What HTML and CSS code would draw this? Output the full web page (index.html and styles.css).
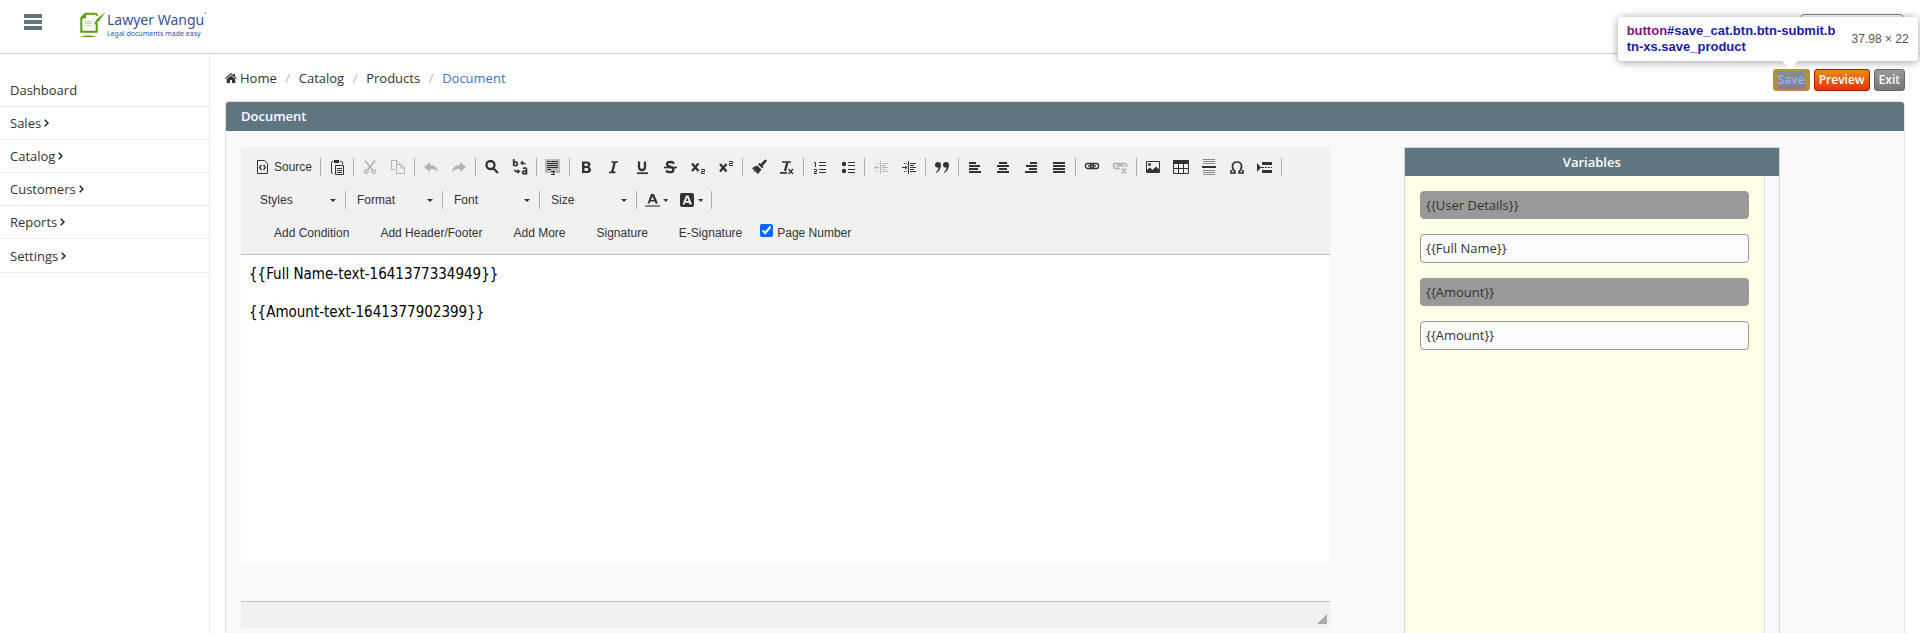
FILE: index.html
```html
<!DOCTYPE html>
<html lang="en">
<head>
<meta charset="utf-8">
<title>Document</title>
<link rel="stylesheet" href="styles.css">
</head>
<body>
<header class="topbar">
  <button class="menu-toggle" aria-label="Toggle menu"><span></span><span></span><span></span></button>
  <a class="logo" href="#">
    <svg class="logo-mark" width="26" height="26" viewBox="0 0 26 26">
      <path d="M5 1H18V20H1V5Z" fill="#fff"/>
      <path d="M15 1.800H5.500L1.300 6V19.700H16.700V11" fill="none" stroke="#5a9e0c" stroke-width="2"/>
      <path d="M1 6.500L6 1V6.500Z" fill="#5a9e0c"/>
      <path d="M5 9.500H12M5 11.500H12M5 13.500H12" stroke="#c0dca0"/>
      <path d="M25.500 0L17 7L13 13.500L19 9Z" fill="#5a9e0c"/>
      <path d="M14 2H17V4" fill="none" stroke="#5a9e0c" stroke-width="1.500"/>
      <path d="M0 24Q8 23 17 24Q8 26.500 0 24Z" fill="#5a9e0c"/>
    </svg>
    <span class="logo-text"><span class="logo-name">Lawyer Wangu<span class="logo-tick">'</span></span><span class="logo-tag">Legal documents made easy</span></span>
  </a>
  <button class="account" aria-label="Account"></button>
</header>
<div class="shell">
  <nav class="sidebar">
    <a href="#">Dashboard</a>
    <a href="#">Sales<svg width="5" height="8" viewBox="0 0 5 8"><path d="M.7 .7L4 4L.7 7.300"/></svg></a>
    <a href="#">Catalog<svg width="5" height="8" viewBox="0 0 5 8"><path d="M.7 .7L4 4L.7 7.300"/></svg></a>
    <a href="#">Customers<svg width="5" height="8" viewBox="0 0 5 8"><path d="M.7 .7L4 4L.7 7.300"/></svg></a>
    <a href="#">Reports<svg width="5" height="8" viewBox="0 0 5 8"><path d="M.7 .7L4 4L.7 7.300"/></svg></a>
    <a href="#">Settings<svg width="5" height="8" viewBox="0 0 5 8"><path d="M.7 .7L4 4L.7 7.300"/></svg></a>
  </nav>
  <main class="main">
    <div class="page-head">
      <nav class="crumbs">
        <a href="#"><svg width="12" height="10" viewBox="0 0 12 10"><path d="M6 0L8.500 2.200V.7H10V3.500L12 5.300L11.300 6L6 1.500L.7 6L0 5.300ZM6 2.500L10.300 6V10H7V7H5V10H1.700V6Z" fill="#333"/></svg>Home</a><i>/</i><a href="#">Catalog</a><i>/</i><a href="#">Products</a><i>/</i><a class="current" href="#">Document</a>
      </nav>
      <div class="actions">
        <div class="save-wrap">
          <button class="btn btn-save"><span>Save</span></button>
          <div class="inspector">
            <span class="selector"><b>button</b>#save_cat.btn.btn-submit.b<br>tn-xs.save_product</span>
            <span class="dims">37.98 × 22</span>
          </div>
        </div>
        <button class="btn btn-preview">Preview</button>
        <button class="btn btn-exit">Exit</button>
      </div>
    </div>
    <section class="panel">
      <h1 class="panel-title">Document</h1>
      <div class="panel-body">
        <div class="editor">
          <div class="toolbar">
            <div class="row">
              <button class="tool"><svg viewBox="0 0 16 16"><path d="M2.500 1.500H9.500L12.500 4.500V14.500H2.500Z" class="ln"/><path d="M6.500 6L4.500 8.500L6.500 11M8.500 6L10.500 8.500L8.500 11" class="ln thick"/></svg><span>Source</span></button>
              <span class="sep"></span>
              <button class="tool" aria-label="Paste from clipboard"><svg viewBox="0 0 16 16"><path d="M4 2.500H3Q2.500 2.500 2.500 4V13Q2.500 14.500 4 14.500M11 2.500H12.500Q13.500 2.500 13.500 4V5" class="ln"/><path d="M5 1H10V4H5Z"/><path d="M6.500 6.500H14.500V15.500H6.500ZM8 9.500H13M8 11.500H13M8 13.500H13" class="ln"/></svg></button>
              <span class="sep"></span>
              <button class="tool off" aria-label="Cut"><svg viewBox="0 0 16 16"><path d="M3 1.500L10.500 11M13 1.500L5.500 11" class="ln bold"/><circle cx="4.300" cy="12.600" r="1.800" class="ln thick"/><circle cx="11.700" cy="12.600" r="1.800" class="ln thick"/></svg></button>
              <button class="tool off" aria-label="Copy"><svg viewBox="0 0 16 16"><path d="M5 10.500H1.500V1.500H6.500L9.500 4.500M6.500 1.500V5M6.500 5.500H11.500L14.500 8.500V14.500H6.500ZM11 5.500V9H14" class="ln"/></svg></button>
              <span class="sep"></span>
              <button class="tool off" aria-label="Undo"><svg viewBox="0 0 16 16"><path d="M1 8L7 3V6Q14 6 15 13Q12 9.500 7 10V13Z"/></svg></button>
              <button class="tool off" aria-label="Redo"><svg viewBox="0 0 16 16"><path d="M15 8L9 3V6Q2 6 1 13Q4 9.500 9 10V13Z"/></svg></button>
              <span class="sep"></span>
              <button class="tool" aria-label="Find"><svg viewBox="0 0 16 16"><circle cx="6.500" cy="6" r="4" class="ln heavy"/><path d="M9.500 9.500L14 14" class="ln heavy"/></svg></button>
              <button class="tool" aria-label="Replace"><svg viewBox="0 0 16 16"><path d="M1.700 0V7M2 3.500Q5.300 2 5.300 5Q5.300 7.500 2 6.300M11 9.500Q14.500 8 14.500 10.500V15.500M14.500 12Q10.500 11.500 10.500 13.700Q11.500 16 14.500 14" class="ln bold"/><path d="M8 4L11 1.500V3.500H12Q14 3.500 14 6Q13 5 11 5V6.500ZM8.500 12.500L5.500 15V13.200H4Q2 13 2 10Q3 11.500 5.500 11.500V10Z"/></svg></button>
              <span class="sep"></span>
              <button class="tool" aria-label="Select all"><svg viewBox="0 0 16 16"><path d="M0 0H15V14H0Z" class="shade"/><path d="M2 2.500H5M2 4.500H13M2 6.500H13M2 8.500H13M2 10.500H6M6 2.500H13" class="ln"/><path d="M6 12.500H10M8.500 12.500V16M6 15.500H10" class="ln"/></svg></button>
              <span class="sep"></span>
              <button class="tool" aria-label="Bold"><svg viewBox="0 0 16 16"><path fill-rule="evenodd" d="M4 2.500H9Q12.500 2.500 12.500 5.300Q12.500 7.300 10.800 7.800Q13 8.300 13 10.700Q13 14 9 14H4ZM6.500 4.500V7H8.500Q10 7 10 5.700Q10 4.500 8.500 4.500ZM6.500 9V12H8.500Q10.400 12 10.400 10.400Q10.400 9 8.500 9Z"/></svg></button>
              <button class="tool" aria-label="Italic"><svg viewBox="0 0 16 16"><path d="M5.500 3H12M3 13.300H9.500" class="ln bold"/><path d="M8.800 3L6.200 13" class="ln heavy"/></svg></button>
              <button class="tool" aria-label="Underline"><svg viewBox="0 0 16 16"><path d="M5 2.500V8Q5 11 8 11Q11 11 11 8V2.500" class="ln heavy"/><path d="M3 14.200H14" class="ln bold"/></svg></button>
              <button class="tool" aria-label="Strikethrough"><svg viewBox="0 0 16 16"><path d="M12 4.500Q11 3 8.200 3Q5 3 5 5.200Q5 7 8 7.700Q11.500 8.500 11.500 10.700Q11.500 13.200 8 13.200Q5.500 13.200 4 11.700" class="ln heavy"/><path d="M2 8.500H15" class="ln bold"/></svg></button>
              <button class="tool" aria-label="Subscript"><svg viewBox="0 0 16 16"><path d="M2 4.500L8.500 12M8.500 4.500L2 12" class="ln heavy"/><path d="M11 10.500H14.500V12.500H11.500V14.500H15" class="ln"/></svg></button>
              <button class="tool" aria-label="Superscript"><svg viewBox="0 0 16 16"><path d="M2 5L8.500 12.500M8.500 5L2 12.500" class="ln heavy"/><path d="M11 2.500H14.500V4.500H11.500V6.500H15" class="ln"/></svg></button>
              <span class="sep"></span>
              <button class="tool" aria-label="Copy formatting"><svg viewBox="0 0 16 16"><path d="M15.500 1L14 .500L9.500 5L8.500 4L7 5.500L11.500 9.500L12.500 8L11.500 7L15.700 2.500ZM6 6.500L1 9L2 10.500L3.500 10L2.500 11.500L4 13L5.500 11.500L5 13.500L7 15L10.500 10.500Z"/></svg></button>
              <button class="tool" aria-label="Remove format"><svg viewBox="0 0 16 16"><path d="M3 3H12M1 13.800H8" class="ln bold"/><path d="M8.500 3L6 12" class="ln heavy"/><path d="M9.500 10L14 15M14 10L9.500 15" class="ln thick"/></svg></button>
              <span class="sep"></span>
              <button class="tool" aria-label="Numbered list"><svg viewBox="0 0 16 16"><path d="M2 3.500H3.500V8M2 10.500H4.500V12.500H2.500V14.500H5M7 3.500H14M7 6.500H14M7 10.500H14M7 13.500H14" class="ln"/></svg></button>
              <button class="tool" aria-label="Bulleted list"><svg viewBox="0 0 16 16"><circle cx="4" cy="5" r="2.200"/><circle cx="4" cy="12" r="2.200"/><path d="M8 3.500H15M8 6.500H15M8 10.500H15M8 13.500H15" class="ln"/></svg></button>
              <span class="sep"></span>
              <button class="tool off" aria-label="Decrease indent"><svg viewBox="0 0 16 16"><path d="M7.500 2V15M9 4.500H15M9 6.500H13M9 8.500H15M9 10.500H13M9 12.500H15M2 8.500H6M3 4.500H4M5 4.500H6M3 12.500H4M5 12.500H6" class="ln"/><path d="M1 8.500L3.500 6.500V10.500Z"/></svg></button>
              <button class="tool" aria-label="Increase indent"><svg viewBox="0 0 16 16"><path d="M7.500 2V15M9 4.500H15M9 6.500H13M9 8.500H15M9 10.500H13M9 12.500H15M1 8.500H5M3 4.500H4M5 4.500H6M3 12.500H4M5 12.500H6" class="ln"/><path d="M6.500 8.500L4 6.500V10.500Z"/></svg></button>
              <span class="sep"></span>
              <button class="tool" aria-label="Block quote"><svg viewBox="0 0 16 16"><path d="M1 6A3 3 0 0 1 7 6Q7 11 2 14V13Q4.500 11 4.500 8.500Q1 9 1 6ZM9 6A3 3 0 0 1 15 6Q15 11 10 14V13Q12.500 11 12.500 8.500Q9 9 9 6Z"/></svg></button>
              <span class="sep"></span>
              <button class="tool" aria-label="Align left"><svg viewBox="0 0 16 16"><path d="M2 3H9V5H2ZM2 6H13V8H2ZM2 9H11V11H2ZM2 12H14V14H2Z"/></svg></button>
              <button class="tool" aria-label="Center"><svg viewBox="0 0 16 16"><path d="M4 3H12V5H4ZM2 6H14V8H2ZM4 9H12V11H4ZM2 12H14V14H2Z"/></svg></button>
              <button class="tool" aria-label="Align right"><svg viewBox="0 0 16 16"><path d="M7 3H14V5H7ZM3 6H14V8H3ZM6 9H14V11H6ZM2 12H14V14H2Z"/></svg></button>
              <button class="tool" aria-label="Justify"><svg viewBox="0 0 16 16"><path d="M2 3H14V5H2ZM2 6H14V8H2ZM2 9H14V11H2ZM2 12H14V14H2Z"/></svg></button>
              <span class="sep"></span>
              <button class="tool" aria-label="Link"><svg viewBox="0 0 16 16"><rect x="1.500" y="4.500" width="8" height="5" rx="2" class="ln thick"/><rect x="6.500" y="4.500" width="8" height="5" rx="2" class="ln thick"/><path d="M4 7H12" class="ln thick"/></svg></button>
              <button class="tool off" aria-label="Unlink"><svg viewBox="0 0 16 16"><path d="M8 9.500H3.500Q1.500 9.500 1.500 7Q1.500 4.500 3.500 4.500H7.500Q9.500 4.500 9.500 7M6.500 7Q6.500 4.500 8.500 4.500H12.500Q14.500 4.500 14.500 6.500V8M4 7H12M9.500 9.500L14 14.500M14 9.500L9.500 14.500" class="ln bold"/></svg></button>
              <span class="sep"></span>
              <button class="tool" aria-label="Image"><svg viewBox="0 0 16 16"><path d="M1.500 2.500H14.500V13.500H1.500Z" class="ln"/><circle cx="4.500" cy="5.500" r="1.500"/><path d="M2 13V11L5 8.500L7.500 11L11 7.500L14 10.500V13Z"/></svg></button>
              <button class="tool" aria-label="Table"><svg viewBox="0 0 16 16"><path d="M0 1H16V5H0Z"/><path d="M.5 4V14.500H15.500V4M0 9.500H16M5.500 5V15M10.500 5V15" class="ln"/></svg></button>
              <button class="tool" aria-label="Horizontal line"><svg viewBox="0 0 16 16"><path d="M2 .5H14M2 2.500H14M2 4.500H14M2 11.500H14M2 13.500H14M2 15.500H14" class="ln faint"/><path d="M1 7H15V9H1Z"/></svg></button>
              <button class="tool" aria-label="Special character"><svg viewBox="0 0 16 16"><path d="M2 11V14H6V12.500Q3.500 11 3.500 7.500Q3.500 3 8 3Q12.500 3 12.500 7.500Q12.500 11 10 12.500V14H14V11" class="ln bold"/></svg></button>
              <button class="tool" aria-label="Page break"><svg viewBox="0 0 16 16"><path d="M0 4L4 8.500L0 13ZM5 3H15V6H5ZM5 11H15V14H5Z"/><path d="M4 8.500H7M8 8.500H10M11 8.500H13M14 8.500H15" class="ln"/></svg></button>
              <span class="sep"></span>
            </div>
            <div class="row combos">
              <button class="combo">Styles<em></em></button><span class="sep"></span>
              <button class="combo">Format<em></em></button><span class="sep"></span>
              <button class="combo">Font<em></em></button><span class="sep"></span>
              <button class="combo">Size<em></em></button><span class="sep"></span>
              <button class="tool color" aria-label="Text color"><svg viewBox="0 0 16 16"><path fill-rule="evenodd" d="M6 2H9L13 11.500H10.500L9.800 9.500H5.300L4.500 11.500H2.500ZM7.500 4.500L6 8H9Z"/><path d="M0 13H15V15H0Z" class="swatch"/></svg><em></em></button>
              <button class="tool color" aria-label="Background color"><svg viewBox="0 0 16 16"><rect y="1" width="14" height="14" rx="2"/><path fill-rule="evenodd" fill="#f1f1f1" d="M6 3.500H8.500L12 12.500H9.500L9 10.800H5.200L4.600 12.500H2.500ZM7.200 5.500L5.900 9H8.400Z"/></svg><em></em></button>
              <span class="sep"></span>
            </div>
            <div class="row">
              <button class="tool plain">Add Condition</button>
              <button class="tool plain">Add Header/Footer</button>
              <button class="tool plain">Add More</button>
              <button class="tool plain">Signature</button>
              <button class="tool plain">E-Signature</button>
              <label class="check"><input type="checkbox" checked><span>Page Number</span></label>
            </div>
          </div>
          <div class="content" contenteditable="true">
            <p>{{Full Name-text-1641377334949}}</p>
            <p>{{Amount-text-1641377902399}}</p>
          </div>
          <div class="statusbar"><svg width="10" height="10" viewBox="0 0 10 10"><path d="M10 0V10H0Z" fill="#aaa"/></svg></div>
        </div>
        <aside class="variables">
          <h2>Variables</h2>
          <div class="var-list">
            <div class="var group">{{User Details}}</div>
            <div class="var">{{Full Name}}</div>
            <div class="var group">{{Amount}}</div>
            <div class="var">{{Amount}}</div>
          </div>
        </aside>
      </div>
    </section>
  </main>
</div>
</body>
</html>
```
FILE: styles.css
```css
* { box-sizing: border-box; }
body {
  margin: 0;
  height: 100vh;
  overflow: hidden;
  display: flex;
  flex-direction: column;
  background: #fff;
  color: #333;
  font: 13px/18px "Open Sans", sans-serif;
}
a { color: inherit; text-decoration: none; }
button { font: inherit; color: inherit; cursor: pointer; margin: 0; }

.topbar {
  display: flex;
  align-items: flex-start;
  height: 54px;
  flex: none;
  padding: 12px 16px 0 24px;
  border-bottom: 1px solid #ccd0d4;
}
.menu-toggle {
  display: flex;
  flex-direction: column;
  gap: 2px;
  width: 18px;
  padding: 2px 0 0;
  border: 0;
  background: none;
}
.menu-toggle span { height: 4px; background: #607680; }
.logo { display: flex; gap: 1px; margin-left: 38px; color: #3851a3; }
.logo-text { display: flex; flex-direction: column; }
.logo-name { font: 14px/16px "Noto Sans", sans-serif; }
.logo-tick { font-size: 8px; vertical-align: top; line-height: 8px; }
.logo-tag { font: 7px/12px "Noto Sans", sans-serif; }
.account {
  width: 104px;
  height: 28px;
  margin: 2px 0 0 auto;
  border: 1px solid #888;
  border-radius: 4px;
  background: #fff;
}

.shell { flex: 1; min-height: 0; display: flex; }
.sidebar {
  width: 210px;
  flex: none;
  padding-top: 20px;
  border-right: 1px solid #e8ebef;
}
.sidebar a {
  display: flex;
  align-items: center;
  gap: 3px;
  height: 33px;
  padding: 0 10px;
  border-bottom: 1px solid #e8eaec;
}
.sidebar a:last-child { height: 34px; }
.sidebar path { fill: none; stroke: #222; stroke-width: 1.5; }

.main {
  flex: 1;
  min-width: 0;
  display: flex;
  flex-direction: column;
  padding: 15px 15px 0;
}
.page-head { display: flex; justify-content: space-between; height: 32px; flex: none; }
.crumbs { display: flex; line-height: 18px; }
.crumbs svg { margin-right: 3px; }
.crumbs i { width: 22px; text-align: center; font-style: normal; color: #bbb; }
.crumbs .current { color: #4272c0; }

.actions { display: flex; gap: 4px; align-items: flex-start; }
.save-wrap { position: relative; }
.btn {
  display: block;
  height: 22px;
  padding: 0 4px;
  border: 1px solid;
  border-radius: 3px;
  font-size: 12px;
  font-weight: 600;
  line-height: 18px;
  color: #fff;
}
.btn-save { border-color: #d08038; background: linear-gradient(#a9a132, #ad8a3c); color: #90b4e8; }
.btn-save span { display: block; background: linear-gradient(#87918e, #897a90); }
.btn-preview { border-color: #b01208; background: linear-gradient(#ea8c0c, #e23311); }
.btn-exit { border-color: #666; background: linear-gradient(#999, #777); }
.inspector {
  position: absolute;
  right: -108px;
  bottom: 30px;
  width: 300px;
  display: flex;
  align-items: center;
  justify-content: space-between;
  padding: 6px 9px;
  border-radius: 3px;
  background: #fff;
  box-shadow: 0 1px 8px rgba(0, 0, 0, .4);
  font: 13px/16px "Liberation Sans", Arial, sans-serif;
  color: #555;
}
.inspector::after {
  content: "";
  position: absolute;
  left: 164px;
  top: 100%;
  border: 8px solid transparent;
  border-top-color: #fff;
  border-bottom: 0;
}
.selector { font-weight: bold; color: #1a1aa6; white-space: nowrap; }
.selector b { color: #881280; }
.dims { font-size: 12px; white-space: nowrap; }

.panel {
  flex: 1;
  min-height: 0;
  display: flex;
  flex-direction: column;
  border: 1px solid #e0e0e0;
  border-bottom: 0;
  border-radius: 4px 4px 0 0;
  background: #f9f9f9;
}
.panel-title {
  flex: none;
  margin: 0;
  padding: 0 15px;
  border-radius: 3px 3px 0 0;
  background: #607680;
  color: #fff;
  font-size: 13px;
  font-weight: 600;
  line-height: 29px;
}
.panel-body {
  flex: 1;
  min-height: 0;
  display: grid;
  grid-template-columns: 35fr 17fr;
  column-gap: 30px;
  padding: 16px 15px 0;
}

.editor {
  display: flex;
  flex-direction: column;
  font: 12px/16px "Liberation Sans", Arial, sans-serif;
}
.toolbar {
  display: flex;
  flex-direction: column;
  gap: 5px;
  padding: 6px 8px 7px;
  border-bottom: 1px solid #bcbcbc;
  background: #f1f1f1;
}
.row { display: flex; height: 28px; align-items: center; }
.combos { padding-left: 2px; }
.tool {
  display: flex;
  align-items: center;
  gap: 3px;
  height: 28px;
  padding: 0 6px;
  border: 0;
  background: none;
}
.tool svg { width: 16px; height: 16px; flex: none; fill: #333; }
.tool .ln { fill: none; stroke: #333; stroke-width: 1; }
.tool .thick { stroke-width: 1.3; }
.tool .bold { stroke-width: 1.7; }
.tool .heavy { stroke-width: 2.3; }
.tool .faint { stroke: #888; }
.tool .shade { fill: #bbb; }
.tool .swatch { fill: #888; }
.off svg { opacity: .32; }
.plain { padding-left: 25px; }
.color { gap: 2px; }
.sep { width: 1px; height: 18px; margin: 0 2px; background: #acacac; }
.combo {
  display: flex;
  align-items: center;
  justify-content: space-between;
  width: 92px;
  height: 28px;
  padding: 0 7px 0 9px;
  border: 0;
  background: none;
}
em { border: 3px solid transparent; border-top-color: #333; border-bottom: 0; }
.color em { width: 5px; border-width: 3px 2px 0 3px; }
.check { display: flex; align-items: center; gap: 4px; margin-left: 12px; }
.check input { width: 13px; height: 13px; margin: 0 0 5px; accent-color: #0a66ff; }
.content {
  min-height: 307px;
  padding: 8px;
  background: #fff;
  color: #000;
  font: 15px/22px "DejaVu Sans Condensed", Tahoma, sans-serif;
}
.content p { margin: 0 0 16px; }
.statusbar {
  display: flex;
  justify-content: flex-end;
  align-items: flex-end;
  height: 27px;
  margin-top: 39px;
  padding: 0 3px 4px;
  border-top: 1px solid #bcbcbc;
  background: #f1f1f1;
}

.variables {
  display: flex;
  flex-direction: column;
  margin: 0 21% 0 44px;
  width: 71%;
  border: 1px solid #d6d6d6;
  border-bottom: 0;
}
.variables h2 {
  margin: 0;
  background: #607680;
  color: #fff;
  font-size: 13px;
  font-weight: 600;
  line-height: 28px;
  text-align: center;
}
.var-list {
  flex: 1;
  display: flex;
  flex-direction: column;
  gap: 15px;
  margin-right: 14px;
  padding: 15px;
  border-right: 1px solid #ddd;
  background: #ffffe8;
}
.var {
  padding: 0 5px;
  border: 1px solid #999;
  border-radius: 4px;
  background: #fcfcfc;
  line-height: 27px;
}
.group { background: #999; line-height: 26px; }
```
